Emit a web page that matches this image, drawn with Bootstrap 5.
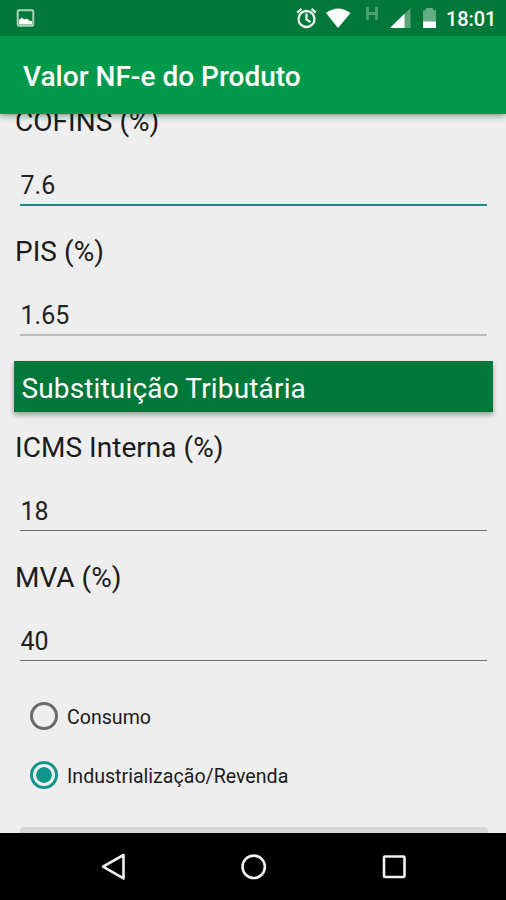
<!DOCTYPE html>
<html lang="pt-BR">
<head>
<meta charset="utf-8">
<meta name="viewport" content="width=device-width, initial-scale=1">
<title>Valor NF-e do Produto</title>
<link rel="stylesheet" href="https://cdn.jsdelivr.net/npm/bootstrap@5.3.0/dist/css/bootstrap.min.css">
<style>
  body { font-family: Roboto, sans-serif; background: #eee; color: #1b1b1b; }
  .screen { height: 900px; width: 506px; }
  .status-bar { height: 36px; background: #007839; z-index: 3; padding-right: 10px; }
  .status-bar svg { display: block; }
  .clock { font-size: 20px; font-weight: 500; line-height: 38px; width: 50px; letter-spacing: -.1px; }
  .app-bar { height: 78px; padding: 0 23px 0; background: #029a4a; box-shadow: 0 1px 7px rgba(0,0,0,.5); z-index: 2; }
  .app-title { font-size: 28px; font-weight: 500; line-height: 78px; padding-top: 2px; letter-spacing: .02px; }
  .pane { padding: 0 14px; }
  .scrolled { margin-top: -9px; }
  .field { height: 130px; }
  .field-label { font-size: 28px; line-height: 34px; height: 34px; padding-left: 1px; display: block; letter-spacing: .04px; }
  .field .form-control { width: 467px; height: 38px; margin: 28px 0 0 6px; padding: 0 .5px 1px; font-size: 25px; line-height: 36px;
    color: #222; border-bottom: 1px solid #6e6e6e !important; }
  .field .form-control.current { height: 39px; border-bottom: 2px solid #168f80 !important; }
  .field .form-control.soft { height: 39px; border-bottom: 2px solid #bcbcbc !important; }
  .section-head { height: 51px; margin: -4px -1px 19px .4px; padding-left: 7px; font-size: 28px; line-height: 55px; letter-spacing: .16px;
    background: #007839; box-shadow: 0 3px 5px rgba(0,0,0,.34); width: 478.5px; }
  .choices { margin-top: -5px; }
  .choice { height: 59px; padding-left: 16px; }
  .choice .form-check-input { width: 28px; height: 28px; margin: 0; border: 3px solid #6b6b6b; background: transparent; }
  .choice .form-check-input:checked { border-color: #12958a; background: radial-gradient(circle, #12958a 0 7.4px, transparent 8.2px); }
  .choice label { font-size: 19.6px; line-height: 28px; padding: 5px 0 0 9px; }
  .action { width: 468px; height: 60px; margin: 23px 0 0 6px; background: #d6d6d6; border-radius: 4px; }
  .nav-keys { height: 67px; background: #000; z-index: 2; }
</style>
<script src="https://cdn.jsdelivr.net/npm/bootstrap@5.3.0/dist/js/bootstrap.bundle.min.js"></script>
</head>
<body>
<div class="screen d-flex flex-column overflow-hidden position-relative">
  <div class="status-bar d-flex justify-content-between flex-shrink-0 position-relative text-white">
    <svg width="50" height="36" viewBox="0 0 50 36">
      <rect x="17.7" y="10.2" width="15.6" height="15.6" rx="1" fill="none" stroke="#a9d3b9" stroke-width="2"/>
      <path d="M19 24.500v-4.500l3-2.500 2 2 3-1 2 2 3 .5v3.500z" fill="#fff"/>
    </svg>
    <div class="d-flex">
      <svg width="150" height="36" viewBox="296 0 150 36" fill="#fff">
        <g fill="none" stroke="#e9f5ed" stroke-width="2.300">
          <circle cx="306.500" cy="19" r="8"/>
          <path d="M306.500 13.500v6l4 2.600M297.200 12.600l4.300-3.800M315.800 12.600l-4.300-3.800"/>
        </g>
        <path d="M326 13q12-9 24.500 0L338 28z"/>
        <path d="M367.500 7v13M376.500 7v13M367.500 13.500h9" fill="none" stroke="#4f9f70" stroke-width="2.800"/>
        <path d="M390 28L410.500 8v20z" fill="#5ba67b"/>
        <path d="M390 28L404.500 13.700V28z"/>
        <path d="M423 10.300h3V8h7v2.300h3V22h-13z" fill="#63ad82"/>
        <path d="M423 21.500h13V28h-13z"/>
      </svg>
      <div class="clock">18:01</div>
    </div>
  </div>
  <header class="app-bar flex-shrink-0 position-relative text-white">
    <h1 class="app-title m-0">Valor NF-e do Produto</h1>
  </header>
  <main class="pane flex-grow-1 overflow-hidden">
    <div class="scrolled">
      <div class="field">
        <label class="field-label" for="cofins">COFINS (%)</label>
        <input class="form-control border-0 rounded-0 bg-transparent current" id="cofins" value="7.6">
      </div>
      <div class="field">
        <label class="field-label" for="pis">PIS (%)</label>
        <input class="form-control border-0 rounded-0 bg-transparent soft" id="pis" value="1.65">
      </div>
      <h2 class="section-head text-white fw-normal">Substituição Tributária</h2>
      <div class="field">
        <label class="field-label" for="icms">ICMS Interna (%)</label>
        <input class="form-control border-0 rounded-0 bg-transparent" id="icms" value="18">
      </div>
      <div class="field">
        <label class="field-label" for="mva">MVA (%)</label>
        <input class="form-control border-0 rounded-0 bg-transparent" id="mva" value="40">
      </div>
      <div class="choices">
        <div class="choice d-flex align-items-center">
          <input class="form-check-input" type="radio" name="destino" id="consumo">
          <label for="consumo">Consumo</label>
        </div>
        <div class="choice d-flex align-items-center">
          <input class="form-check-input" type="radio" name="destino" id="revenda" checked>
          <label for="revenda">Industrialização/Revenda</label>
        </div>
      </div>
      <div class="action"></div>
    </div>
  </main>
  <nav class="nav-keys flex-shrink-0">
    <svg class="d-block" width="506" height="67" viewBox="0 833 506 67" fill="none" stroke="#f1f1f1" stroke-width="2.600">
      <path d="M103 866.700L123.500 855v23.400z" stroke-linejoin="round"/>
      <circle cx="253.700" cy="866.800" r="11.200"/>
      <rect x="384" y="856.500" width="20.500" height="20.500" rx="1"/>
    </svg>
  </nav>
</div>
</body>
</html>
